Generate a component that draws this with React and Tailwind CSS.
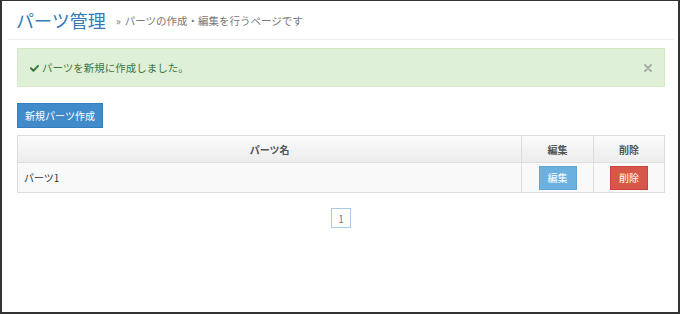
const jp = { fontFamily: '"Noto Sans CJK JP", "Noto Sans", sans-serif' };

function CheckIcon() {
  return (
    <svg width="9" height="8" viewBox="0 0 10 8" className="mr-[3px]">
      <path d="M1 4.2 L3.8 7 L9 1.6" fill="none" stroke="#3c763d" strokeWidth="2.2" strokeLinecap="round" strokeLinejoin="round" />
    </svg>
  );
}

function CloseIcon() {
  return (
    <svg width="8" height="8" viewBox="0 0 8 8">
      <path d="M1 1 L7 7 M7 1 L1 7" stroke="#a5b0a2" strokeWidth="2" strokeLinecap="round" />
    </svg>
  );
}

export default function App() {
  return (
    <div
      className="box-border h-[314px] w-[680px] overflow-hidden border-2 border-t border-[#333] bg-white text-[#333]"
      style={jp}
    >
      <header className="ml-[6px] mr-[4px] flex h-[39px] items-center border-b border-[#eee] pl-[8px]">
        <h1 className="text-[18px] leading-none text-[#337ab7]">パーツ管理</h1>
        <span className="ml-[10px] mt-[2px] text-[10.5px] text-[#777]">
          <span className="mr-[4px]">»</span>パーツの作成・編集を行うページです
        </span>
      </header>

      <main className="w-[663px] pl-[15px]">
        <div className="mt-[8px] flex h-[39px] items-center justify-between border border-[#d6e9c6] bg-[#dff0d8] pl-[12px] pr-[12px] text-[10.5px] text-[#3c763d]">
          <div className="flex items-center">
            <CheckIcon />
            <span>パーツを新規に作成しました。</span>
          </div>
          <CloseIcon />
        </div>

        <button className="mt-[16px] flex h-[25px] w-[86px] items-center justify-center border border-[#357ebd] bg-[#428bca] text-[10px] text-white">
          新規パーツ作成
        </button>

        <table className="mt-[7px] w-[648px] border-collapse text-[10px]">
          <thead>
            <tr className="h-[27px] bg-gradient-to-b from-[#fbfbfb] to-[#ececec] font-bold text-[#555]">
              <th className="w-[505px] border border-[#ddd] font-bold">パーツ名</th>
              <th className="w-[72px] border border-[#ddd] font-bold">編集</th>
              <th className="w-[71px] border border-[#ddd] font-bold">削除</th>
            </tr>
          </thead>
          <tbody>
            <tr className="h-[30px] bg-[#f9f9f9]">
              <td className="border border-[#ddd] pl-[6px]">パーツ1</td>
              <td className="border border-[#ddd]">
                <div className="flex justify-center">
                  <button className="h-[24px] w-[38px] border border-[#5ea6d8] bg-[#6ab1e0] text-[10px] text-white">編集</button>
                </div>
              </td>
              <td className="border border-[#ddd]">
                <div className="flex justify-center">
                  <button className="h-[24px] w-[38px] border border-[#c9453b] bg-[#d6574a] text-[10px] text-white">削除</button>
                </div>
              </td>
            </tr>
          </tbody>
        </table>

        <div className="mt-[15px] flex justify-center">
          <span className="flex h-[20px] w-[20px] items-center justify-center border border-[#a9c9e8] text-[10px] text-[#6b7f95]">1</span>
        </div>
      </main>
    </div>
  );
}
